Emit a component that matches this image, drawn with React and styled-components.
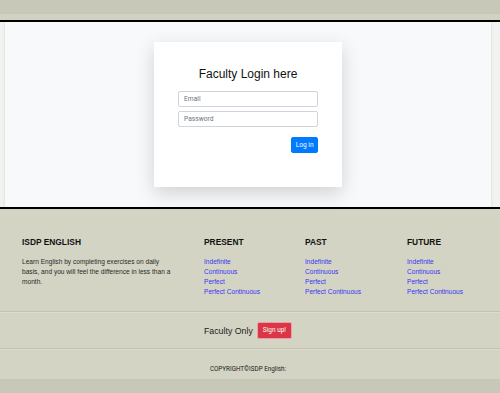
import React from 'react';
import styled, { createGlobalStyle } from 'styled-components';

const GlobalStyle = createGlobalStyle`
  html, body {
    margin: 0;
    padding: 0;
    background: #c8c8b8;
    font-family: "Liberation Sans", Arial, sans-serif;
  }
  * { box-sizing: border-box; }
`;

const Page = styled.div`
  width: 500px;
  min-height: 393px;
  background: #c8c8b8;
`;

const TopBand = styled.div`
  height: 14px;
  background: #c8c8b8;
`;

const TopStrip = styled.div`
  height: 6px;
  background: #d2d2c2;
`;

const Main = styled.section`
  border-top: 2px solid #000;
  border-bottom: 2px solid #000;
  background: #f2f2f0;
  display: flex;
`;

const MainInner = styled.div`
  flex: 1;
  margin: 0 9px 0 5px;
  background: #f8f9fa;
  box-shadow: -1px 0 2px rgba(0, 0, 0, 0.06), 1px 0 2px rgba(0, 0, 0, 0.06);
  padding: 20px 0 20px;
  display: flex;
  justify-content: center;
`;

const Card = styled.div`
  width: 188px;
  background: #fff;
  padding: 25px 24px 34px;
  box-shadow: 0 6px 18px rgba(0, 0, 0, 0.16);
  display: flex;
  flex-direction: column;
`;

const Title = styled.h3`
  margin: 0 0 10px;
  font-size: 12px;
  line-height: 14px;
  font-weight: 400;
  color: #111;
  text-align: center;
`;

const Input = styled.input`
  width: 140px;
  height: 16px;
  margin: 0 0 4px;
  padding: 0 5px;
  border: 1px solid #ced4da;
  border-radius: 2px;
  font-family: Roboto, "Liberation Sans", sans-serif;
  font-size: 6.7px;
  color: #495057;
  outline: none;
  &::placeholder { color: #6c757d; }
`;

const Actions = styled.div`
  display: flex;
  justify-content: flex-end;
  margin-top: 6px;
`;

const Button = styled.button`
  height: ${p => p.$h || 16}px;
  padding: 0 ${p => p.$px || 5}px;
  border: 1px solid ${p => p.$border || p.$bg};
  border-radius: 2px;
  background: ${p => p.$bg};
  color: #fff;
  font-family: Roboto, "Liberation Sans", sans-serif;
  font-size: 6.5px;
  line-height: 1;
  cursor: pointer;
`;

const Footer = styled.footer`
  background: #d4d4c4;
`;

const FooterInner = styled.div`
  margin: 0 9px 0 5px;
`;

const Grid = styled.div`
  display: grid;
  grid-template-columns: 182px 101px 102px 1fr;
  padding: 28px 0 14px 17px;
`;

const Col = styled.div`
  display: flex;
  flex-direction: column;
`;

const Heading = styled.h4`
  margin: 0 0 10px;
  font-size: 8.4px;
  line-height: 10px;
  font-weight: 700;
  color: #111;
`;

const Desc = styled.p`
  margin: 0;
  width: 149px;
  font-size: 6.6px;
  line-height: 10px;
  color: #2a2a2a;
`;

const Link = styled.a`
  font-size: 6.6px;
  line-height: 10px;
  color: #3535f5;
  text-decoration: none;
`;

const Divider = styled.div`
  border-top: 1px solid #c3c3b3;
  border-bottom: 1px solid #dcdccd;
`;

const SignupRow = styled.div`
  height: 35px;
  display: flex;
  align-items: center;
  justify-content: center;
  gap: 4px;
`;

const SignupText = styled.span`
  font-size: 8.8px;
  color: #222;
`;

const Copyright = styled.p`
  margin: 0;
  padding: 15px 0 6px;
  font-family: Roboto, "Liberation Sans", sans-serif;
  font-size: 6.3px;
  line-height: 8px;
  font-weight: 400;
  text-align: center;
  color: #1a1a1a;
`;

const BottomBand = styled.div`
  height: 15px;
  background: #c8c8b8;
`;

const columns = [
  { title: 'PRESENT' },
  { title: 'PAST' },
  { title: 'FUTURE' },
];

const tenses = ['Indefinite', 'Continuous', 'Perfect', 'Perfect Continuous'];

const App = () => {
  return (
    <Page>
      <GlobalStyle />
      <TopBand />
      <TopStrip />
      <Main>
        <MainInner>
          <Card>
            <Title>Faculty Login here</Title>
            <Input type="email" placeholder="Email" />
            <Input type="password" placeholder="Password" />
            <Actions>
              <Button $bg="#007bff" $h={16} $px={3.5}>Log in</Button>
            </Actions>
          </Card>
        </MainInner>
      </Main>
      <Footer>
        <FooterInner>
          <Grid>
            <Col>
              <Heading>ISDP ENGLISH</Heading>
              <Desc>
                Learn English by completing exercises on daily basis, and you will feel the difference in less than a month.
              </Desc>
            </Col>
            {columns.map((c, i) => (
              <Col key={i}>
                <Heading>{c.title}</Heading>
                {tenses.map(t => (
                  <Link key={t} href="#">{t}</Link>
                ))}
              </Col>
            ))}
          </Grid>
        </FooterInner>
        <Divider />
        <FooterInner>
          <SignupRow>
            <SignupText>Faculty Only</SignupText>
            <Button $bg="#dc3545" $border="#e8a0a8" $h={17} $px={5}>Sign up!</Button>
          </SignupRow>
        </FooterInner>
        <Divider />
        <FooterInner>
          <Copyright>COPYRIGHT©ISDP English:</Copyright>
        </FooterInner>
      </Footer>
      <BottomBand />
    </Page>
  );
};

export default App;
